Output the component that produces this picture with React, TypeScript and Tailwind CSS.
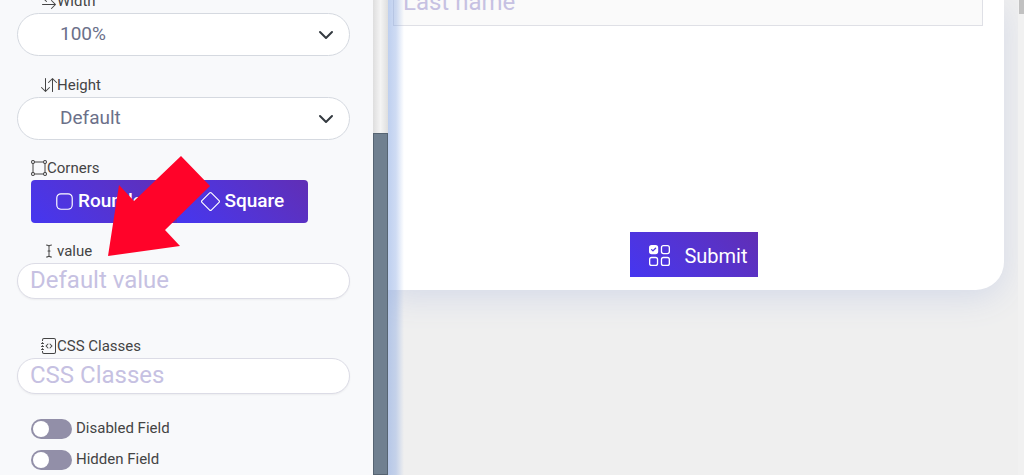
import { useState } from 'react';
import type { ReactNode } from 'react';
import {
  BsApp,
  BsArrowDownUp,
  BsArrowLeftRight,
  BsBoundingBoxCircles,
  BsCursorText,
  BsDiamond,
  BsJournalCode,
  BsUiChecksGrid,
} from 'react-icons/bs';

type SelectFieldProps = {
  id: string;
  label: string;
  icon: ReactNode;
  options: string[];
};

const SelectField = ({ id, label, icon, options }: SelectFieldProps) => {
  const [value, setValue] = useState(options[0]);

  return (
    <div>
      <label htmlFor={id} className="flex h-6 items-center pl-6 text-[15px] text-[#444444]">
        {icon}
        {label}
      </label>
      <div className="relative">
        <select
          id={id}
          value={value}
          onChange={(e) => setValue(e.target.value)}
          className="block h-[43px] w-full appearance-none rounded-full border border-[#d5d9e0] bg-white pl-[42px] pr-10 text-[19px] text-[#6b7089] focus:outline-none"
        >
          {options.map((option) => (
            <option key={option}>{option}</option>
          ))}
        </select>
        <svg
          viewBox="0 0 16 16"
          className="pointer-events-none absolute right-4 top-1/2 h-4 w-4 -translate-y-1/2"
          fill="none"
          stroke="#343a40"
          strokeWidth="2"
          strokeLinecap="round"
          strokeLinejoin="round"
        >
          <path d="m2 5 6 6 6-6" />
        </svg>
      </div>
    </div>
  );
};

type TextFieldProps = {
  id: string;
  label: string;
  icon: ReactNode;
  placeholder: string;
};

const TextField = ({ id, label, icon, placeholder }: TextFieldProps) => (
  <div>
    <label htmlFor={id} className="flex h-6 items-center pl-6 text-[15px] text-[#444444]">
      {icon}
      {label}
    </label>
    <input
      type="text"
      id={id}
      placeholder={placeholder}
      className="block h-9 w-full rounded-full border border-[#dcdce6] bg-white px-3 pb-0.5 text-2xl text-[#6b7089] shadow-xs placeholder:text-[#c6c1e2] focus:outline-none"
    />
  </div>
);

const Toggle = ({ id, label }: { id: string; label: string }) => (
  <div className="flex h-5 items-center gap-1">
    <input
      type="checkbox"
      id={id}
      className="h-5 w-[41px] appearance-none rounded-full bg-[#928fa8] p-[2px] before:block before:h-4 before:w-4 before:rounded-full before:bg-white checked:bg-[#4a34ea] checked:before:ml-5"
    />
    <label htmlFor={id} className="pb-0.5 text-[15px] text-[#444444]">
      {label}
    </label>
  </div>
);

const App: React.FC = () => {
  return (
    <div className="flex h-screen overflow-hidden bg-[#efefef] font-['Roboto',sans-serif]">
      <aside className="relative w-[373px] shrink-0 bg-[#f8f9fb] pl-[17px] pr-[23px]">
        <div className="-mt-[11px] space-y-[17px]">
          <SelectField
            id="width"
            label="Width"
            icon={<BsArrowLeftRight className="h-4 w-4" />}
            options={['100%', '75%', '50%', '25%']}
          />
          <SelectField
            id="height"
            label="Height"
            icon={<BsArrowDownUp className="h-4 w-4" />}
            options={['Default', 'Small', 'Large']}
          />
        </div>

        <fieldset className="mt-4 pl-[14px]">
          <legend className="flex h-6 items-center text-[15px] text-[#444444]">
            <BsBoundingBoxCircles className="h-4 w-4" />
            Corners
          </legend>
          <div className="flex h-[43px] w-fit overflow-hidden rounded text-[19px] text-white">
            <button
              type="button"
              className="flex items-center gap-1 bg-linear-45 from-[#4536f0] to-[#602eb5] px-6 font-medium"
            >
              <BsApp />
              Rounded
            </button>
            <button
              type="button"
              className="flex items-center gap-1 bg-linear-45 from-[#4536f0] to-[#602eb5] px-6 font-medium"
            >
              <BsDiamond />
              Square
            </button>
          </div>
        </fieldset>

        <div className="mt-4 space-y-[35px]">
          <TextField
            id="value"
            label="value"
            icon={<BsCursorText className="h-4 w-4" />}
            placeholder="Default value"
          />
          <TextField
            id="classes"
            label="CSS Classes"
            icon={<BsJournalCode className="h-4 w-4" />}
            placeholder="CSS Classes"
          />
        </div>

        <div className="mt-[25px] space-y-[11px] pl-[14px]">
          <Toggle id="disabled" label="Disabled Field" />
          <Toggle id="hidden" label="Hidden Field" />
        </div>

        {/* pointer towards the default value */}
        <svg
          viewBox="0 0 102 100"
          className="pointer-events-none absolute left-[108px] top-[156px] h-[100px] w-[102px]"
        >
          <path d="M0 100 11 29 26 45 73 0 102 30 57 74 72 90Z" fill="#ff0329" />
        </svg>
      </aside>

      {/* panel scrollbar */}
      <div className="flex w-[15px] shrink-0 flex-col bg-linear-to-r from-[#dedede] via-[#f4f4f4] to-[#dedede] pt-[133px]">
        <div className="flex-1 border border-[#566472] bg-[#708090]" />
      </div>

      <main className="relative flex min-w-0 flex-1 overflow-hidden">
        <div className="min-w-0 flex-1 overflow-hidden pr-[14px]">
          <form
            className="flex h-[290px] flex-col rounded-br-[28px] bg-white pl-[5px] pr-[21px] shadow-[0_8px_32px_#d5dae8]"
            onSubmit={(e) => e.preventDefault()}
          >
            <input
              type="text"
              aria-label="Last name"
              placeholder="Last name"
              className="-mt-[22px] h-12 w-full shrink-0 border border-[#dfe0e6] bg-[#fafafa] px-[9px] text-2xl placeholder:text-[#c6c1e2] focus:outline-none"
            />
            <button
              type="submit"
              className="mb-[13px] ml-3 mt-auto flex h-[45px] items-center gap-[14px] self-center bg-linear-45 from-[#4536f0] to-[#602eb5] pl-[19px] pr-[10px] pt-0.5 text-xl text-white"
            >
              <BsUiChecksGrid className="h-[21px] w-[21px]" />
              Submit
            </button>
          </form>
        </div>
        <div className="w-[6px] shrink-0 bg-[#f1f1f1] pl-px">
          <div className="h-[14px] bg-[#c1c1c1]" />
        </div>
        <div className="pointer-events-none absolute inset-y-0 left-0 w-4 bg-linear-to-r from-[#7ea0e080] via-[#7ea0e060] to-transparent" />
      </main>
    </div>
  );
};

export default App;
